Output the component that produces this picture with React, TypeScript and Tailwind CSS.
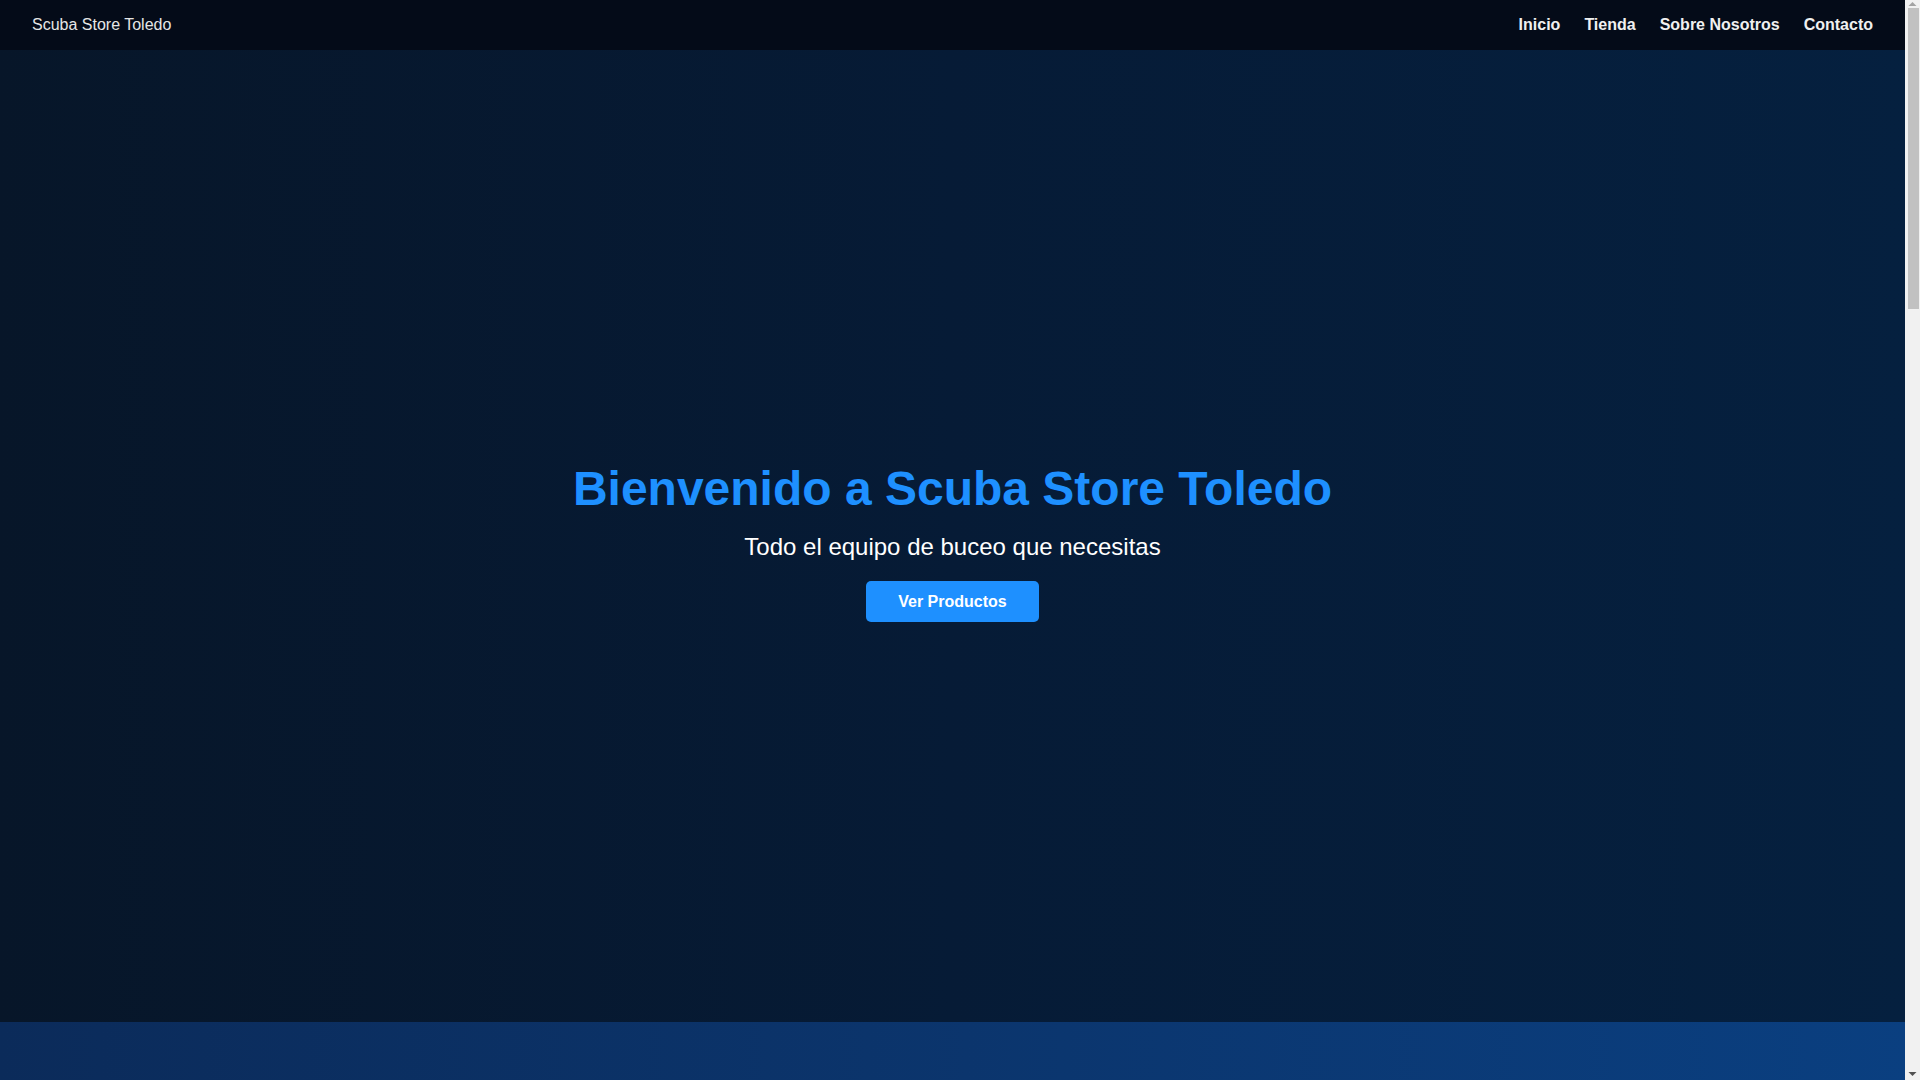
import React from "react";

function Scrollbar() {
  return (
    <div className="flex h-screen w-[15px] shrink-0 flex-col items-center bg-[#f1f1f1]">
      <svg width="15" height="7" viewBox="0 0 15 7" className="mt-[1px] shrink-0">
        <polygon points="3.5,5 7.5,1 11.5,5" fill="#a3a3a3" />
      </svg>
      <div className="ml-[1px] h-[301px] w-[11px] bg-[#c1c1c1]" />
      <div className="flex-1" />
      <svg width="15" height="7" viewBox="0 0 15 7" className="mb-[2px] shrink-0">
        <polygon points="3.5,1 11.5,1 7.5,5" fill="#505050" />
      </svg>
    </div>
  );
}

export default function App() {
  return (
    <div className="flex h-screen overflow-hidden bg-[#0a2f63] font-['Liberation_Sans',Arial,sans-serif] text-white">
      <div className="h-screen flex-1 overflow-hidden">
        <nav className="flex h-[50px] items-center justify-between bg-[#040b18] px-8">
          <div className="text-[16px] text-[#e6e6e6]">Scuba Store Toledo</div>
          <ul className="flex gap-6 text-[16px] font-bold text-[#f0f0f0]">
            <li>Inicio</li>
            <li>Tienda</li>
            <li>Sobre Nosotros</li>
            <li>Contacto</li>
          </ul>
        </nav>
        <section className="flex h-[90vh] flex-col items-center justify-center bg-gradient-to-r from-[#071629] via-[#061b36] to-[#05203f] pt-[10px] text-center">
          <h1 className="text-[48px] font-bold leading-[1.2] text-[#1e90ff]">Bienvenido a Scuba Store Toledo</h1>
          <p className="mt-3 text-[24px] leading-[36px] text-white">Todo el equipo de buceo que necesitas</p>
          <button className="mt-4 rounded-[5px] bg-[#1e90ff] px-8 py-[9px] text-[16px] font-bold leading-[23px] text-white">Ver Productos</button>
        </section>
        <section className="h-[400px] bg-gradient-to-r from-[#0b2b5a] to-[#0a3f80]"></section>
      </div>
      <Scrollbar />
    </div>
  );
}
